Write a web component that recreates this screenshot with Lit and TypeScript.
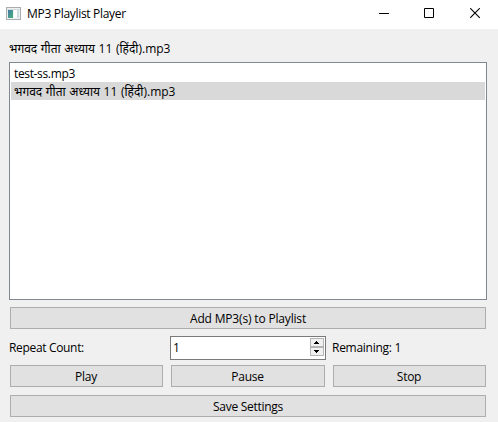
import { LitElement, html, css } from "lit";
import { customElement, state } from "lit/decorators.js";

@customElement("app-root")
export class AppRoot extends LitElement {
  static styles = css`
    :host {
      display: flex;
      flex-direction: column;
      box-sizing: border-box;
      width: 498px;
      height: 422px;
      overflow: hidden;
      background: #f0f0f0;
      color: #000;
      font: 12px/18px "Open Sans", "Noto Sans", sans-serif;
      letter-spacing: -0.27px;
      white-space: nowrap;
    }
    * { box-sizing: border-box; }
    svg { display: block; }
    .titlebar {
      display: flex;
      align-items: center;
      height: 29px;
      padding: 0 17px 2px 6px;
      background: #fff;
      flex: none;
    }
    .title { flex: 1; margin-left: 6px; letter-spacing: -0.31px; }
    .controls { display: flex; gap: 35px; }
    .content { padding: 11px 11px 0 9px; display: flex; flex-direction: column; }
    .current { height: 18px; margin-bottom: 4px; }
    .hindi { letter-spacing: 0; word-spacing: 0.5px; }
    .list {
      height: 238px;
      border: 1px solid #828790;
      padding: 1px;
      background: #fff;
    }
    .item { height: 18px; padding-left: 3px; line-height: 20px; }
    .item.plain { letter-spacing: -0.35px; }
    .item.selected { background: #d9d9d9; }
    .button {
      display: block;
      height: 22px;
      padding: 2px 1px 0 0;
      border: 1px solid #adadad;
      border-radius: 0;
      background: #e1e1e1;
      color: inherit;
      font: inherit;
      line-height: 18px;
      letter-spacing: inherit;
      text-align: center;
    }
    .wide { margin: 7px 1px 0; padding-right: 0; }
    .add { letter-spacing: -0.17px; }
    .row { display: grid; grid-template-columns: 161px 156px 1fr; height: 22px; margin-top: 7px; line-height: 23px; }
    .label { letter-spacing: -0.33px; }
    .remaining { padding-left: 6px; }
    .spin {
      display: flex;
      border: 1px solid #7a7a7a;
      background: #fff;
      padding: 1px;
      line-height: 20px;
    }
    .value { flex: 1; padding-left: 1px; }
    .steps { display: flex; flex-direction: column; width: 14px; }
    .step {
      height: 9px;
      border: 1px solid #b5b5b5;
      background: #f0f0f0;
      display: grid;
      place-items: center;
    }
    .buttons { display: grid; grid-template-columns: 153px 154px 153px; gap: 8px; margin: 7px 1px 0; }
    .last { margin-top: 8px; }
  `;

  @state() private files = ["test-ss.mp3", "भगवद गीता अध्याय 11 (हिंदी).mp3"];
  @state() private selected = 1;

  private script(name: string) {
    return /[\u0900-\u097f]/.test(name) ? "hindi" : "plain";
  }

  render() {
    const current = this.files[this.selected];
    return html`
      <div class="titlebar">
        <svg width="15" height="13" viewBox="0 0 15 13" shape-rendering="crispEdges">
          <defs>
            <linearGradient id="pane" x1="0" y1="0" x2="1" y2="1">
              <stop offset="0" stop-color="#4778a8" />
              <stop offset="1" stop-color="#45b578" />
            </linearGradient>
          </defs>
          <path fill="#a9adad" d="M0 0h15v13H0z" />
          <path fill="#eef1f2" d="M1 1h13v1H1zM1 3h13v9H1z" />
          <path fill="#d5dada" d="M1 2h13v1H1z" />
          <path fill="url(#pane)" d="M2 3h5v8H2z" />
          <path fill="#fff" d="M8 3h3v8H8z" />
          <path fill="#cbdce2" d="M11 3h2v8h-2z" />
        </svg>
        <span class="title">MP3 Playlist Player</span>
        <div class="controls">
          <svg width="11" height="11"><path d="M1 5.5h10" stroke="#000" /></svg>
          <svg width="11" height="11"><path d="M.5 .5h9v9h-9z" fill="none" stroke="#000" /></svg>
          <svg width="11" height="11"><path d="M.2 .2l9.6 9.6M9.8 .2l-9.6 9.6" stroke="#000" stroke-width="1.1" /></svg>
        </div>
      </div>
      <div class="content">
        <div class="current ${this.script(current)}">${current}</div>
        <div class="list">
          ${this.files.map((f, i) => html`<div class="item ${this.script(f)} ${i === this.selected ? "selected" : ""}">${f}</div>`)}
        </div>
        <button class="button wide add">Add MP3(s) to Playlist</button>
        <div class="row">
          <span class="label">Repeat Count:</span>
          <div class="spin">
            <span class="value">1</span>
            <div class="steps">
              <span class="step"><svg width="6" height="3" shape-rendering="crispEdges"><path d="M2 0h1v1h1v1h1v1H0V2h1V1h1z" /></svg></span>
              <span class="step"><svg width="6" height="3" shape-rendering="crispEdges"><path d="M0 0h5v1H4v1H3v1H2V2H1V1H0z" /></svg></span>
            </div>
          </div>
          <span class="remaining">Remaining: 1</span>
        </div>
        <div class="buttons">
          <button class="button">Play</button>
          <button class="button">Pause</button>
          <button class="button">Stop</button>
        </div>
        <button class="button wide last">Save Settings</button>
      </div>
    `;
  }
}
